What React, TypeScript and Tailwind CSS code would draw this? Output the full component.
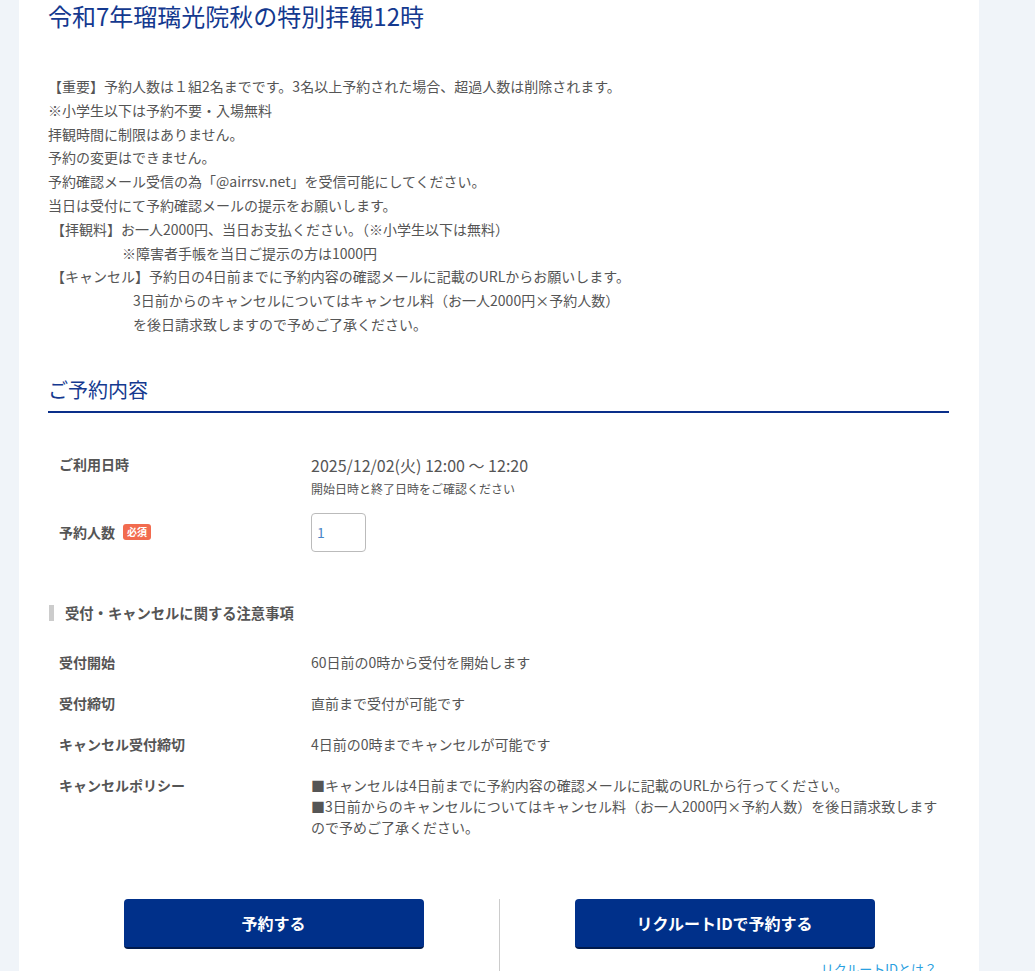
const font = {
  fontFamily: '"Noto Sans CJK JP", "Noto Sans", sans-serif',
};

function Row({
  label,
  children,
}: {
  label: string;
  children: React.ReactNode;
}) {
  return (
    <div className="flex">
      <div className="w-[263px] shrink-0 pl-[11px] text-[14px] font-bold leading-[21px] text-[#555]">
        {label}
      </div>
      <div className="text-[14px] leading-[21px] text-[#555]">{children}</div>
    </div>
  );
}

export default function App() {
  return (
    <div className="min-h-screen bg-[#f0f4f9]" style={font}>
      <div className="ml-[19px] min-h-screen w-[960px] bg-white pl-[29px] pr-[30px]">
        <h1 className="text-[24px] leading-[32px] font-normal text-[#14398f]">
          令和7年瑠璃光院秋の特別拝観12時
        </h1>

        <div className="mt-[43px] text-[14px] leading-[23.8px] text-[#555]">
          <p>【重要】予約人数は１組2名までです。3名以上予約された場合、超過人数は削除されます。</p>
          <p>※小学生以下は予約不要・入場無料</p>
          <p>拝観時間に制限はありません。</p>
          <p>予約の変更はできません。</p>
          <p>予約確認メール受信の為「@airrsv.net」を受信可能にしてください。</p>
          <p>当日は受付にて予約確認メールの提示をお願いします。</p>
          <p className="pl-[3px]">【拝観料】お一人2000円、当日お支払ください。（※小学生以下は無料）</p>
          <p className="pl-[74px]">※障害者手帳を当日ご提示の方は1000円</p>
          <p className="pl-[3px]">【キャンセル】予約日の4日前までに予約内容の確認メールに記載のURLからお願いします。</p>
          <p className="pl-[85px]">3日前からのキャンセルについてはキャンセル料（お一人2000円×予約人数）</p>
          <p className="pl-[85px]">を後日請求致しますので予めご了承ください。</p>
        </div>

        <h2 className="mt-[38px] border-b-2 border-[#0a2f8a] pb-[6px] text-[20px] leading-[30px] font-normal text-[#14398f]">
          ご予約内容
        </h2>

        <div className="mt-[40px] flex">
          <div className="w-[263px] shrink-0 pl-[11px] text-[14px] font-bold leading-[22px] text-[#555]">
            ご利用日時
          </div>
          <div className="text-[#555]">
            <div className="text-[16px] leading-[24px]">2025/12/02(火) 12:00 〜 12:20</div>
            <div className="text-[12px] leading-[24px]">開始日時と終了日時をご確認ください</div>
          </div>
        </div>

        <div className="mt-[12px] flex items-center">
          <div className="flex w-[263px] shrink-0 items-center gap-[8px] pl-[11px]">
            <span className="text-[14px] font-bold leading-[24px] text-[#555]">予約人数</span>
            <span className="rounded-[3px] bg-[#f26b4f] px-[4px] text-[10px] font-bold leading-[16px] text-white">
              必須
            </span>
          </div>
          <div className="flex h-[39px] w-[55px] items-center rounded-[4px] border border-[#bbb] pl-[5px] text-[14px] text-[#4a86c8]">
            1
          </div>
        </div>

        <div className="mt-[49px] flex items-center gap-[11px] pl-px">
          <span className="h-[16px] w-[5px] bg-[#ccc]" />
          <h3 className="text-[14.3px] font-bold leading-[24px] text-[#555]">
            受付・キャンセルに関する注意事項
          </h3>
        </div>

        <div className="mt-[27px] flex flex-col gap-[20px]">
          <Row label="受付開始">60日前の0時から受付を開始します</Row>
          <Row label="受付締切">直前まで受付が可能です</Row>
          <Row label="キャンセル受付締切">4日前の0時までキャンセルが可能です</Row>
          <Row label="キャンセルポリシー">
            <p>■キャンセルは4日前までに予約内容の確認メールに記載のURLから行ってください。</p>
            <p className="whitespace-nowrap">
              ■3日前からのキャンセルについてはキャンセル料（お一人2000円×予約人数）を後日請求致します
            </p>
            <p>ので予めご了承ください。</p>
          </Row>
        </div>

        <div className="mt-[61px] flex">
          <div className="flex w-[451px] justify-center">
            <button className="h-[50px] w-[300px] rounded-[4px] border-b-2 border-[#001a4d] bg-[#00308a] text-[16px] font-bold text-white">
              予約する
            </button>
          </div>
          <div className="flex flex-1 flex-col items-center border-l border-[#ccc] pb-[20px]">
            <button className="h-[50px] w-[300px] rounded-[4px] border-b-2 border-[#001a4d] bg-[#00308a] text-[16px] font-bold text-white">
              リクルートIDで予約する
            </button>
            <a className="mt-[10px] self-end pr-[12px] text-[13px] leading-[20px] text-[#2aa0e0]">
              リクルートIDとは？
            </a>
          </div>
        </div>
      </div>
    </div>
  );
}
